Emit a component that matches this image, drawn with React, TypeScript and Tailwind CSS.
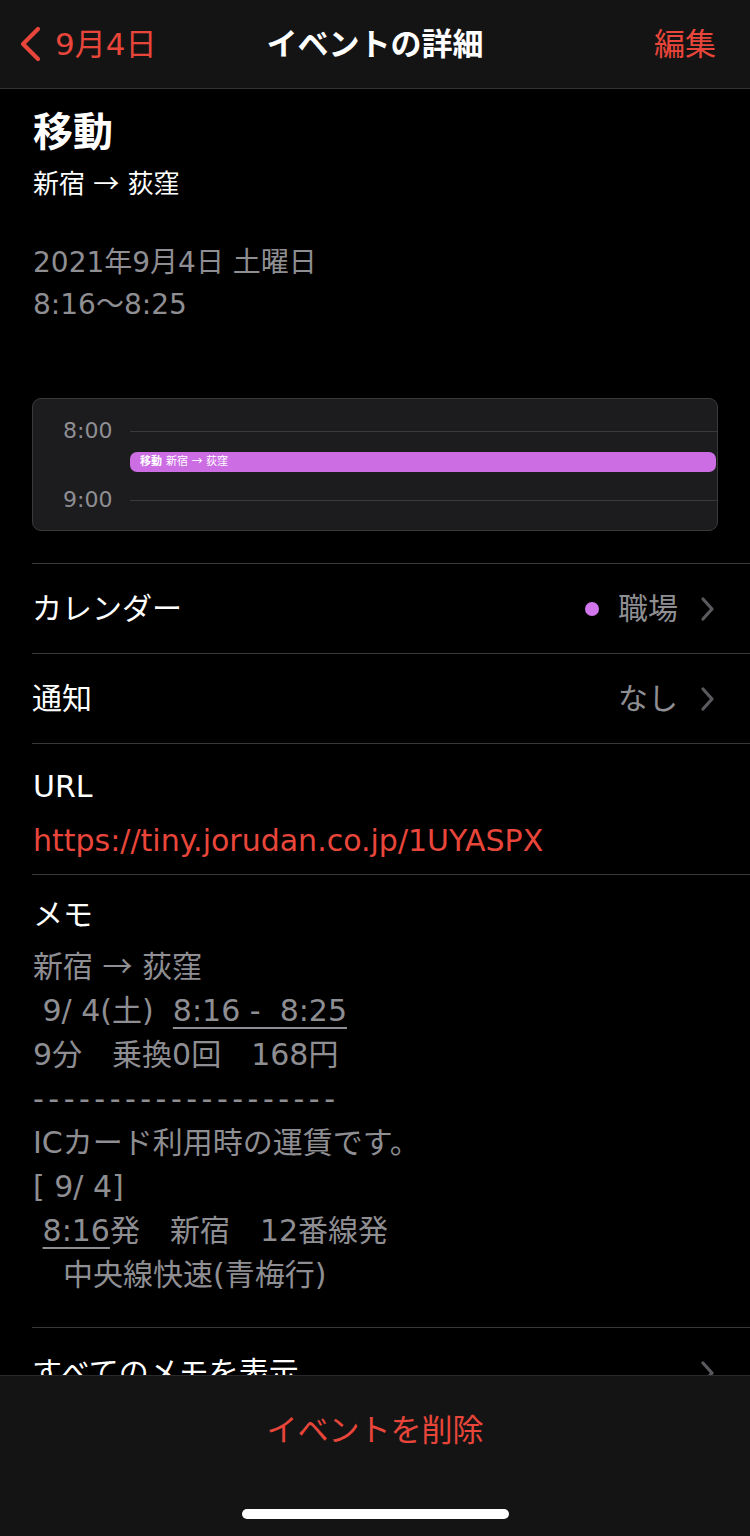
import React from 'react';

const RED = 'text-[#e9463b]';

function ChevronRight() {
  return (
    <svg width="16" height="26" viewBox="0 0 16 26" className="shrink-0">
      <path d="M3 3 L12 13 L3 23" fill="none" stroke="#5a5a5e" strokeWidth="3.2" strokeLinecap="round" strokeLinejoin="round" />
    </svg>
  );
}

// the arrow in the reference is the wide CJK one
function Arrow() {
  return (
    <span className="leading-none" style={{ fontFamily: '"Noto Sans CJK JP", sans-serif' }}>
      →
    </span>
  );
}

function DetailRow({ label, value, dot }: { label: string; value: string; dot?: boolean }) {
  return (
    <div className="h-[90px] border-t border-[#38383a] flex items-center justify-between pr-[34px]">
      <span className="text-[30px] text-white leading-[44px]">{label}</span>
      <div className="flex items-center">
        {dot && <span className="w-[14px] h-[14px] rounded-full bg-[#d276ee] mr-[19px]" />}
        <span className="text-[30px] text-[#8e8e93] leading-[44px] mr-[22px]">{value}</span>
        <ChevronRight />
      </div>
    </div>
  );
}

function TimeRow({ time }: { time: string }) {
  return (
    <div className="flex items-center h-[24px]">
      <span className="w-[80px] pl-[30px] text-[22px] text-[#8e8e93] leading-[24px]">{time}</span>
      <div className="flex-1 h-px bg-[#3a3a3c] ml-[17px]" />
    </div>
  );
}

export default function App() {
  const line = 'h-[44px]';

  return (
    <div
      className="w-[750px] h-[1536px] bg-black flex flex-col overflow-hidden"
      style={{ fontFamily: '"DejaVu Sans", "Noto Sans CJK JP", sans-serif' }}
    >
      {/* header */}
      <div className="h-[89px] shrink-0 bg-[#141414] border-b border-[#333335] grid grid-cols-[1fr_auto_1fr] items-center">
        <div className={`flex items-center pl-[18px] ${RED}`}>
          <svg width="24" height="36" viewBox="0 0 24 36">
            <path d="M20 3 L5 18 L20 33" fill="none" stroke="#e9463b" strokeWidth="4.2" strokeLinecap="round" strokeLinejoin="round" />
          </svg>
          <span className="ml-[13px] text-[31px] leading-[44px]">9月4日</span>
        </div>
        <div className="text-[31px] font-bold text-white leading-[44px]">イベントの詳細</div>
        <div className={`text-right pr-[34px] text-[31px] leading-[44px] ${RED}`}>編集</div>
      </div>

      {/* scrolling content */}
      <div className="flex-1 overflow-hidden pl-[32px]">
        <div className="pt-[19px] pl-px">
          <div className="h-[48px] text-[40px] font-bold text-white leading-[48px]">移動</div>
          <div className="mt-[10px] h-[36px] text-[26px] text-white leading-[36px]">
            新宿 <Arrow /> 荻窪
          </div>
          <div className="mt-[40px] h-[42px] text-[28px] text-[#8e8e93] leading-[42px]">2021年9月4日 土曜日</div>
          <div className="h-[42px] text-[28px] text-[#8e8e93] leading-[42px]">8:16〜8:25</div>
        </div>

        {/* day preview card */}
        <div className="mt-[72px] mr-[32px] h-[133px] rounded-[9px] border border-[#3a3a3c] bg-[#1c1c1e] pt-[20px] overflow-hidden">
          <TimeRow time="8:00" />
          <div className="mt-[9px] ml-[97px] mr-px h-[20px] rounded-[7px] bg-[#cc6de4] flex items-center pl-[10px] text-[11px] text-white leading-[20px]">
            <span className="font-bold">移動</span>
            <span className="ml-[4px]">
              新宿 <Arrow /> 荻窪
            </span>
          </div>
          <div className="mt-[16px]">
            <TimeRow time="9:00" />
          </div>
        </div>

        <div className="mt-[32px]">
          <DetailRow label="カレンダー" value="職場" dot />
          <DetailRow label="通知" value="なし" />

          <div className="border-t border-[#38383a] pt-[21px] pb-[11px] pl-px">
            <div className={`${line} text-[30px] text-white leading-[44px]`}>URL</div>
            <div className={`${line} mt-[10px] text-[30px] leading-[44px] ${RED}`}>https://tiny.jorudan.co.jp/1UYASPX</div>
          </div>

          <div className="border-t border-[#38383a] pt-[18px] pb-[30px] pl-px">
            <div className={`${line} text-[30px] text-white leading-[44px]`}>メモ</div>
            <div className="mt-[8px] text-[30px] text-[#8e8e93] leading-[44px] whitespace-pre">
              <div className={line}>
                新宿 <Arrow /> 荻窪
              </div>
              <div className={line}>
                {' 9/ 4(土)  '}
                <span className="underline decoration-[2px] underline-offset-[6px] decoration-[#8e8e93]">8:16 -  8:25</span>
              </div>
              <div className={line}>9分　乗換0回　168円</div>
              <div className={`${line} tracking-[4.5px]`}>--------------------</div>
              <div className={line}>ICカード利用時の運賃です。</div>
              <div className={line}>[ 9/ 4]</div>
              <div className={line}>
                {' '}
                <span className="underline decoration-[2px] underline-offset-[6px] decoration-[#8e8e93]">8:16</span>
                {'発　新宿　12番線発'}
              </div>
              <div className={line}>{'　中央線快速(青梅行)'}</div>
            </div>
          </div>

          <div className="h-[90px] border-t border-[#38383a] flex items-center justify-between pr-[34px]">
            <span className="text-[30px] text-white leading-[44px]">すべてのメモを表示</span>
            <ChevronRight />
          </div>
        </div>
      </div>

      {/* bottom bar */}
      <div className="h-[161px] shrink-0 bg-[#141414] border-t border-[#2a2a2c] flex flex-col items-center pt-[32px]">
        <div className={`text-[31px] leading-[44px] ${RED}`}>イベントを削除</div>
        <div className="mt-[57px] w-[267px] h-[10px] rounded-full bg-white" />
      </div>
    </div>
  );
}
